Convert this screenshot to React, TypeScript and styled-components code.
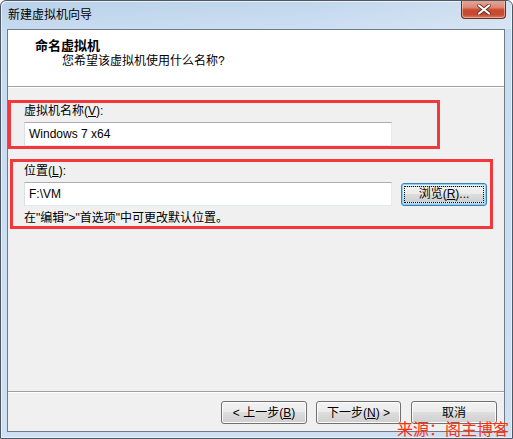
import React from "react";
import styled, { createGlobalStyle } from "styled-components";

const Global = createGlobalStyle`
  html, body { margin: 0; padding: 0; background: #ffffff; }
  body { font-family: "Liberation Sans", "Noto Sans CJK SC", sans-serif; font-size: 12px; color: #000; }
  * { box-sizing: border-box; }
`;

const Window = styled.div`
  position: relative;
  width: 513px;
  height: 439px;
  display: flex;
  flex-direction: column;
  border: 1px solid #4e5863;
  border-radius: 6px 6px 0 0;
  background: linear-gradient(180deg, #b9d1ea 0px, #c8dbf0 30px, #cfe0f3 100%);
  box-shadow: inset 1px 1px 0 #e6eff9, inset -1px -1px 0 #e6eff9;
  overflow: hidden;
`;

const TitleBar = styled.div`
  height: 28px;
  display: flex;
  align-items: flex-start;
  padding-left: 7px;
  background: linear-gradient(90deg, rgba(255,255,255,0) 0%, rgba(255,255,255,0.12) 60%, rgba(255,255,255,0.3) 100%);
`;

const Title = styled.div`
  flex: 1;
  margin-top: 6px;
  line-height: 16px;
  font-size: 12px;
  color: #000;
`;

const CloseButton = styled.div`
  width: 45px;
  height: 19px;
  margin-top: -1px;
  margin-right: 6px;
  border: 1px solid #6b2d22;
  border-top: none;
  border-radius: 0 0 4px 4px;
  background: linear-gradient(180deg, #e7a796 0%, #dc8a76 40%, #c84a30 55%, #c8492f 80%, #d9795f 100%);
  box-shadow: inset 0 0 0 1px rgba(255, 220, 210, 0.5);
  display: flex;
  align-items: center;
  justify-content: center;
`;

const Client = styled.div`
  flex: 1;
  margin: 0 7px 6px 6px;
  border: 1px solid #6e7b89;
  background: #f0f0f0;
  display: flex;
  flex-direction: column;
`;

const Header = styled.div`
  height: 57px;
  background: #ffffff;
  border-bottom: 1px solid #a0a0a0;
  padding: 8px 0 0 27px;
`;

const HeaderTitle = styled.div`
  font-weight: bold;
  font-size: 13px;
  line-height: 15px;
`;

const HeaderSub = styled.div`
  padding-left: 27px;
  line-height: 16px;
`;

const Main = styled.div`
  flex: 1;
  display: flex;
  flex-direction: column;
  gap: 10px;
  padding-top: 12px;
  border-top: 1px solid #ffffff;
`;

const Group = styled.div<{ $left: number; $width: number; $padLeft: number }>`
  margin-left: ${(p) => p.$left}px;
  width: ${(p) => p.$width}px;
  border: 3px solid #f2383d;
  padding: 0 0 0 ${(p) => p.$padLeft}px;
  display: flex;
  flex-direction: column;
`;

const Label = styled.div<{ $top: number }>`
  margin-top: ${(p) => p.$top}px;
  line-height: 16px;
  margin-bottom: 3px;
`;

const Row = styled.div`
  display: flex;
  align-items: center;
  gap: 9px;
`;

const TextBox = styled.div<{ $h: number }>`
  width: 368px;
  height: ${(p) => p.$h}px;
  background: #ffffff;
  border: 1px solid #e3e9ef;
  border-top-color: #abadb3;
  border-left-color: #dbdfe6;
  padding-left: 4px;
  display: flex;
  align-items: center;
  font-size: 12px;
`;

const Hint = styled.div`
  margin-top: 4px;
  line-height: 16px;
`;

const Footer = styled.div`
  height: 40px;
  border-top: 1px solid #a0a0a0;
  box-shadow: inset 0 1px 0 #ffffff;
  display: flex;
  align-items: flex-start;
  justify-content: flex-end;
  padding: 9px 7px 0 0;
`;

const Button = styled.div<{ $w: number; $ml?: number; $focus?: boolean }>`
  width: ${(p) => p.$w}px;
  height: 23px;
  margin-left: ${(p) => p.$ml ?? 0}px;
  border: 1px solid ${(p) => (p.$focus ? "#3c7fb1" : "#707070")};
  border-radius: 3px;
  background: ${(p) =>
    p.$focus
      ? "linear-gradient(180deg, #eaf6fd 0%, #d9f0fc 49%, #bee6fd 50%, #a7d9f5 100%)"
      : "linear-gradient(180deg, #f2f2f2 0%, #ebebeb 49%, #dddddd 50%, #cfcfcf 100%)"};
  box-shadow: inset 0 0 0 1px ${(p) => (p.$focus ? "#8ed0f5" : "#fcfcfc")};
  display: flex;
  align-items: center;
  justify-content: center;
  line-height: 16px;
  position: relative;
`;

const FocusRect = styled.div`
  position: absolute;
  inset: 2px;
  border: 1px dotted #000;
  display: flex;
  align-items: center;
  justify-content: center;
  background: linear-gradient(180deg, #f2f2f2 0%, #ebebeb 49%, #dddddd 50%, #cfcfcf 100%);
`;

const Watermark = styled.div`
  position: absolute;
  right: 3px;
  bottom: 0px;
  color: #ff2e12;
  font-family: "Noto Sans CJK SC", sans-serif;
  font-size: 16px;
  line-height: 19px;
`;

export default function App() {
  return (
    <>
      <Global />
      <Window>
        <TitleBar>
          <Title>新建虚拟机向导</Title>
          <CloseButton>
            <svg width="14" height="11" viewBox="0 0 14 11">
              <path d="M2 1.5 L12 9.5 M12 1.5 L2 9.5" stroke="#5a2a22" strokeWidth="3.6" strokeLinecap="round" />
              <path d="M2 1.5 L12 9.5 M12 1.5 L2 9.5" stroke="#ffffff" strokeWidth="2.2" strokeLinecap="round" />
            </svg>
          </CloseButton>
        </TitleBar>
        <Client>
          <Header>
            <HeaderTitle>命名虚拟机</HeaderTitle>
            <HeaderSub>您希望该虚拟机使用什么名称?</HeaderSub>
          </Header>
          <Main>
            <Group $left={0} $width={432} $padLeft={13}>
              <Label $top={0}>
                虚拟机名称(<u>V</u>):
              </Label>
              <TextBox $h={24}>Windows 7 x64</TextBox>
            </Group>
            <Group $left={2} $width={483} $padLeft={11}>
              <Label $top={1}>
                位置(<u>L</u>):
              </Label>
              <Row>
                <TextBox $h={24}>F:\VM</TextBox>
                <Button $w={86} $focus>
                  <FocusRect>
                    浏览(<u>R</u>)...
                  </FocusRect>
                </Button>
              </Row>
              <Hint>在"编辑"&gt;"首选项"中可更改默认位置。</Hint>
            </Group>
          </Main>
          <Footer>
            <Button $w={86}>&lt; 上一步(<u>B</u>)</Button>
            <Button $w={85} $ml={9}>下一步(<u>N</u>) &gt;</Button>
            <Button $w={86} $ml={10}>取消</Button>
          </Footer>
        </Client>
        <Watermark>来源：阁主博客</Watermark>
      </Window>
    </>
  );
}
